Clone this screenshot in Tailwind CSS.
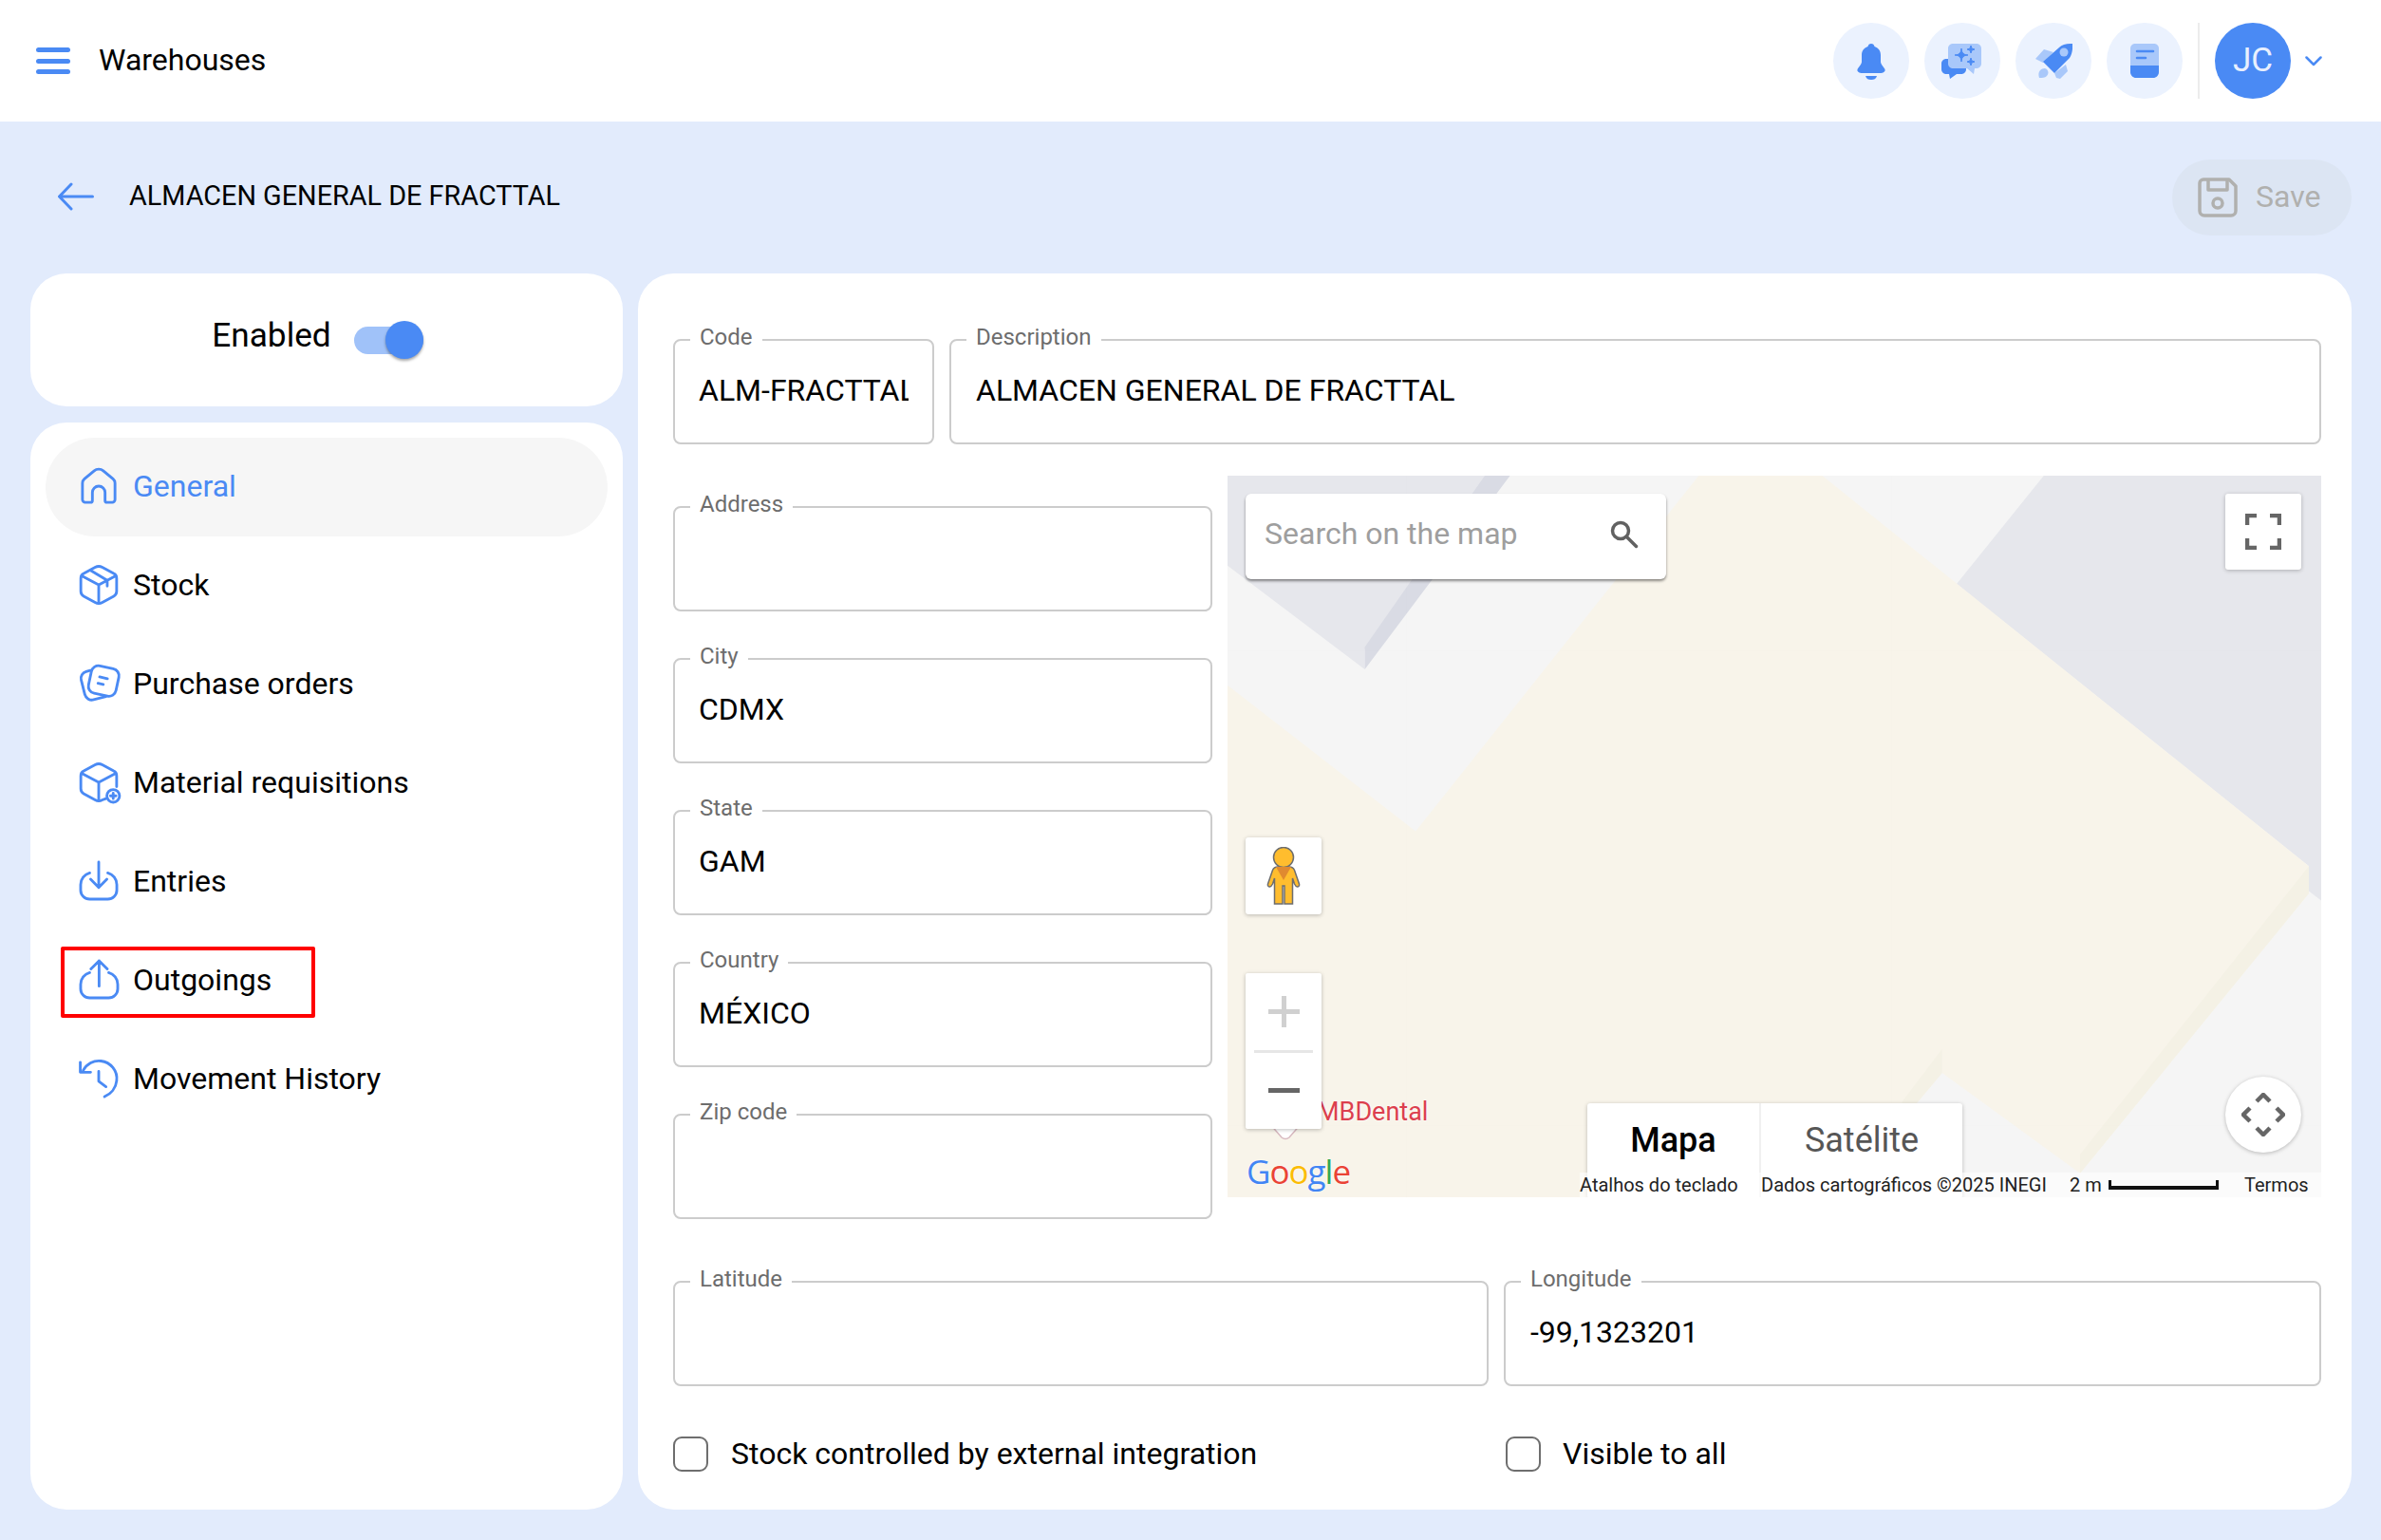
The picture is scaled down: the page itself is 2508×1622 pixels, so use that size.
<!DOCTYPE html>
<html lang="en">
<head>
  <meta charset="UTF-8">
  <title>Warehouses</title>
  <script src="https://cdn.jsdelivr.net/npm/@tailwindcss/browser@4"></script>
</head>
<body class="bg-[#e2ebfc] h-[1622px] overflow-hidden font-['Roboto',sans-serif] text-black">
  <!-- Top bar -->
  <header class="bg-white h-[128px] flex items-center pl-[38px] pr-[62px]">
    <div class="w-[36px] h-[28px] flex flex-col justify-between">
      <span class="h-[5px] rounded-full bg-[#4a8af4]"></span>
      <span class="h-[5px] rounded-full bg-[#4a8af4]"></span>
      <span class="h-[5px] rounded-full bg-[#4a8af4]"></span>
    </div>
    <div class="ml-[30px] -mt-[2px] text-[32px] leading-none">Warehouses</div>
    <div class="ml-auto flex items-center">
      <div class="flex gap-4">
        <div class="w-[80px] h-[80px] rounded-full bg-[#ebf2fe] flex items-center justify-center">
          <svg width="40" height="40" viewBox="0 0 40 40" fill="#4a8af4"><path d="M20 2c-2 0-3 1-3.500 3C12 6.500 10 10 10 14v7c0 3-3 5-4.500 8-.7 2 1 3.500 4 4h21c3-.5 4.700-2 4-4-1.500-3-4.500-5-4.500-8v-7c0-4-2-7.500-6.500-9C23 3 22 2 20 2Z"/><path d="M14 36h12c-1 3-3 4-6 4s-5-1-6-4Z"/></svg>
        </div>
        <div class="w-[80px] h-[80px] rounded-full bg-[#ebf2fe] flex items-center justify-center">
          <svg width="44" height="40" viewBox="0 0 44 40"><path fill="#4a8af4" d="M5 18h16c2.800 0 5 2.200 5 5v6c0 2.800-2.200 5-5 5h-5l-7 5-1-5H5c-2.800 0-5-2.200-5-5v-6c0-2.800 2.200-5 5-5Z"/><path fill="#a9c8fa" d="M12 2h25c2.800 0 5 2.200 5 5v16c0 2.800-2.200 5-5 5h-2l-1 6-7-6H12c-2.800 0-5-2.200-5-5V7c0-2.800 2.200-5 5-5Z"/><path fill="#4a8af4" d="M21 7Q21 14 28 14Q21 14 21 21Q21 14 14 14Q21 14 21 7Z M31 4Q31 8 35 8Q31 8 31 12Q31 8 27 8Q31 8 31 4Z M31 17Q31 21 35 21Q31 21 31 25Q31 21 27 21Q31 21 31 17Z" stroke="#4a8af4" stroke-width="1"/></svg>
        </div>
        <div class="w-[80px] h-[80px] rounded-full bg-[#ebf2fe] flex items-center justify-center">
          <svg width="40" height="40" viewBox="0 0 40 40"><path fill="#a9c8fa" d="M1 18l9-10 10 3-11 11ZM21 33l12-9 2 7-8 8-4-1ZM5 38c-1-3-1-6 1-8 2-2 5-3 7-1 2 2 2 5 0 7-2 2-5 2-8 2Z"/><path fill="#4a8af4" d="M9 21 26 6c3-3 8-4.500 14-4 .5 6-.5 11-3 15L21 33Z"/><circle cx="31" cy="11" r="4.500" fill="#a9c8fa"/></svg>
        </div>
        <div class="w-[80px] h-[80px] rounded-full bg-[#ebf2fe] flex items-center justify-center">
          <svg width="40" height="40" viewBox="0 0 40 40"><path fill="#a9c8fa" d="M10 2h20c2.800 0 5 2.200 5 5v22H5V7c0-2.800 2.200-5 5-5Z"/><path fill="#4a8af4" d="M5 25h30v7c0 3.300-2.700 6-6 6H11c-3.300 0-6-2.700-6-6Z"/><path stroke="#4a8af4" stroke-width="2.600" stroke-linecap="round" d="M12 10h17M12 17h9"/></svg>
        </div>
      </div>
      <div class="ml-4 w-[2px] h-[80px] bg-[#ececec]"></div>
      <div class="ml-4 w-[80px] h-[80px] rounded-full bg-[#4a8af4] text-[#e8f0fe] text-[35px] flex items-center justify-center">JC</div>
      <svg class="ml-[15px]" width="18" height="11" viewBox="0 0 18 11" fill="none" stroke="#4a8af4" stroke-width="2.500" stroke-linecap="round" stroke-linejoin="round"><path d="M1.500 1.500 9 9l7.500-7.500"/></svg>
    </div>
  </header>

  <!-- Sub header -->
  <div class="h-[160px] flex items-center pl-[61px] pr-[31px]">
    <svg class="-mt-[3px]" width="38" height="30" viewBox="0 0 38 30" fill="none" stroke="#4a8af4" stroke-width="3" stroke-linecap="round" stroke-linejoin="round"><path d="M36.500 15H2M14 2 1.500 15 14 28"/></svg>
    <div class="ml-[37px] -mt-[4px] text-[28.800px] leading-none">ALMACEN GENERAL DE FRACTTAL</div>
    <div class="ml-auto w-[189px] h-[80px] rounded-full bg-[#dce5f3] flex items-center pl-[27px] text-[#b0b0ae] text-[32px]">
      <svg width="42" height="42" viewBox="0 0 42 42" fill="none" stroke="#b0b0ae" stroke-width="3.500" stroke-linejoin="round"><path d="M6 2h27l7 7v26c0 2.800-2.200 5-5 5H7c-2.800 0-5-2.200-5-5V6c0-2.200 1.800-4 4-4Z"/><path d="M11 2v11h20V2"/><circle cx="21" cy="27" r="5"/></svg>
      <span class="ml-[19px] -mt-[3px]">Save</span>
    </div>
  </div>

  <div class="flex gap-4 pl-[32px] pr-[31px]">
    <!-- Left column -->
    <aside class="w-[624px] flex flex-col gap-[17px]">
      <div class="h-[140px] bg-white rounded-[38px] flex items-center justify-center pr-[19px]">
        <span class="text-[35.200px] leading-none -mt-[8px]">Enabled</span>
        <span class="relative ml-[24px] w-[73px] h-[29px] rounded-full bg-[#a0c2f9]">
          <span class="absolute right-0 -top-[6px] w-[40px] h-[40px] rounded-full bg-[#4a8af4] shadow-[0_2px_3px_rgba(0,0,0,0.35)]"></span>
        </span>
      </div>
      <nav class="h-[1145px] bg-white rounded-[38px] pt-4 px-4 text-[32px]">
        <a class="h-[104px] pb-[3px] rounded-full bg-[#f6f6f6] text-[#4a8af4] flex items-center pl-[36px] gap-4">
          <svg class="w-[40px] h-[40px] overflow-visible" viewBox="1.500 1.500 21 21" fill="none" stroke="#4a8af4" stroke-width="1.500" stroke-linejoin="round"><path d="M3 19.500V10.300c0-.9.400-1.700 1.100-2.300l5.400-4.500c1.400-1.200 3.600-1.200 5 0l5.400 4.500c.7.600 1.100 1.400 1.100 2.300v9.200c0 .8-.7 1.500-1.500 1.500h-3c-.6 0-1-.4-1-1v-4.500a3.500 3.500 0 0 0-7 0V20c0 .6-.4 1-1 1h-3C3.700 21 3 20.300 3 19.500Z"/></svg>
          General
        </a>
        <a class="h-[104px] pb-[3px] flex items-center pl-[36px] gap-4">
          <svg class="w-[40px] h-[40px] overflow-visible" viewBox="1.500 1.500 21 21" fill="none" stroke="#4a8af4" stroke-width="1.500" stroke-linecap="round" stroke-linejoin="round"><path d="M10 2.300c1.300-.7 2.700-.7 4 0l6.300 3.400c1 .5 1.600 1.600 1.600 2.700v7.200c0 1.100-.6 2.200-1.600 2.700L14 21.700c-1.300.7-2.700.7-4 0l-6.300-3.400c-1-.5-1.600-1.600-1.600-2.700V8.400c0-1.100.6-2.200 1.600-2.700Z"/><path d="M2.600 7 12 12l9.400-5M12 12v10M7.500 4l9.200 5.500v3.200"/></svg>
          Stock
        </a>
        <a class="h-[104px] pb-[3px] flex items-center pl-[36px] gap-4">
          <svg class="w-[40px] h-[40px] overflow-visible" viewBox="1.500 1.500 21 21" fill="none" stroke="#4a8af4" stroke-width="1.500" stroke-linecap="round" stroke-linejoin="round"><path d="M7.300 4.700 5 5.400C3 6 1.800 8 2.300 10l2 8c.6 2.200 2.800 3.500 4.900 2.900l6.800-1.700"/><rect x="7" y="2.800" width="15.500" height="15.500" rx="4" transform="rotate(12 14.700 10.500)"/><path d="M12.500 8.300l4.300 1M11.600 11.800l2.900.7"/></svg>
          Purchase orders
        </a>
        <a class="h-[104px] pb-[3px] flex items-center pl-[36px] gap-4">
          <svg class="w-[40px] h-[40px] overflow-visible" viewBox="1.500 1.500 21 21" fill="none" stroke="#4a8af4" stroke-width="1.500" stroke-linecap="round" stroke-linejoin="round"><path d="M16 21l-2 .7c-1.300.7-2.700.7-4 0l-6.300-3.400c-1-.5-1.600-1.600-1.600-2.700V8.400c0-1.100.6-2.200 1.600-2.700L10 2.300c1.300-.7 2.700-.7 4 0l6.300 3.400c1 .5 1.600 1.600 1.600 2.700v6"/><path d="M2.600 7 12 12l9.400-5M12 12v10"/><circle cx="20" cy="19.500" r="3.500"/><path d="M20 18v3M18.500 19.500h3"/></svg>
          Material requisitions
        </a>
        <a class="h-[104px] pb-[3px] flex items-center pl-[36px] gap-4">
          <svg class="w-[40px] h-[40px] overflow-visible" viewBox="1.500 1.500 21 21" fill="none" stroke="#4a8af4" stroke-width="1.500" stroke-linecap="round" stroke-linejoin="round"><path d="M7 7.500c-2.900.8-5 3.400-5 6.500v3c0 2.800 2.200 5 5 5h10c2.800 0 5-2.200 5-5v-3c0-3.100-2.100-5.700-5-6.500"/><path d="M12 1.500V15M7.500 11l4.500 4.500 4.500-4.500"/></svg>
          Entries
        </a>
        <a class="relative h-[104px] pb-[3px] flex items-center pl-[36px] gap-4">
          <svg class="w-[40px] h-[40px] overflow-visible" viewBox="1.500 1.500 21 21" fill="none" stroke="#4a8af4" stroke-width="1.500" stroke-linecap="round" stroke-linejoin="round"><path d="M7 8c-2.900.8-5 3.400-5 6.500V17c0 2.800 2.200 5 5 5h10.500c2.800 0 5-2.200 5-5v-2.500c0-3.100-2.100-5.700-5-6.500"/><path d="M12.200 15.500V1.500M7.700 6l4.500-4.500L16.700 6"/></svg>
          Outgoings
          <span class="absolute left-[16px] top-[16px] w-[268px] h-[75px] border-[4px] border-[#ff0000] rounded-[2px]"></span>
        </a>
        <a class="h-[104px] pb-[3px] flex items-center pl-[36px] gap-4">
          <svg class="w-[40px] h-[40px] overflow-visible" viewBox="1.500 1.500 21 21" fill="none" stroke="#4a8af4" stroke-width="1.500" stroke-linecap="round" stroke-linejoin="round"><path d="M3.400 7.500C5.300 3.900 9.200 1.800 13.200 2.300c5.400.6 9.400 5.500 8.700 10.900-.4 3.900-3.100 7.200-6.700 8.800"/><path d="M1.800 3v5.500h5.700M12 8v5.500l4 3"/></svg>
          Movement History
        </a>
      </nav>
    </aside>

    <!-- Form card -->
    <main class="flex-1 h-[1302px] bg-white rounded-[38px] pt-[69px] pl-[37px] pr-[32px]">
      <div class="flex gap-4">
        <div class="relative w-[275px] h-[111px] pb-[4px] border-2 border-[#cccccc] rounded-[8px] flex items-center pl-[25px] pr-[25px] text-[32px]">
          <span class="absolute left-[16px] -top-[19px] bg-white px-[10px] text-[24px] leading-[30px] text-[#6d6d6d]">Code</span>
          <div class="overflow-hidden whitespace-nowrap">ALM-FRACTTAL</div>
        </div>
        <div class="relative flex-1 h-[111px] pb-[4px] border-2 border-[#cccccc] rounded-[8px] flex items-center pl-[26px] text-[32px]">
          <span class="absolute left-[16px] -top-[19px] bg-white px-[10px] text-[24px] leading-[30px] text-[#6d6d6d]">Description</span>
          ALMACEN GENERAL DE FRACTTAL
        </div>
      </div>

      <div class="flex gap-4 mt-[33px]">
        <div class="w-[568px] pt-[32px] flex flex-col gap-[49px]">
          <div class="relative h-[111px] pb-[4px] border-2 border-[#cccccc] rounded-[8px] flex items-center pl-[25px] text-[32px]">
            <span class="absolute left-[16px] -top-[19px] bg-white px-[10px] text-[24px] leading-[30px] text-[#6d6d6d]">Address</span>
          </div>
          <div class="relative h-[111px] pb-[4px] border-2 border-[#cccccc] rounded-[8px] flex items-center pl-[25px] text-[32px]">
            <span class="absolute left-[16px] -top-[19px] bg-white px-[10px] text-[24px] leading-[30px] text-[#6d6d6d]">City</span>
            CDMX
          </div>
          <div class="relative h-[111px] pb-[4px] border-2 border-[#cccccc] rounded-[8px] flex items-center pl-[25px] text-[32px]">
            <span class="absolute left-[16px] -top-[19px] bg-white px-[10px] text-[24px] leading-[30px] text-[#6d6d6d]">State</span>
            GAM
          </div>
          <div class="relative h-[111px] pb-[4px] border-2 border-[#cccccc] rounded-[8px] flex items-center pl-[25px] text-[32px]">
            <span class="absolute left-[16px] -top-[19px] bg-white px-[10px] text-[24px] leading-[30px] text-[#6d6d6d]">Country</span>
            MÉXICO
          </div>
          <div class="relative h-[111px] pb-[4px] border-2 border-[#cccccc] rounded-[8px] flex items-center pl-[25px] text-[32px]">
            <span class="absolute left-[16px] -top-[19px] bg-white px-[10px] text-[24px] leading-[30px] text-[#6d6d6d]">Zip code</span>
          </div>
        </div>

        <!-- Map -->
        <div class="relative flex-1 h-[760px] overflow-hidden bg-[#f5f5f5]">
          <svg class="absolute inset-0 w-full h-full" viewBox="16 22 1506 1508" preserveAspectRatio="none">
            <path fill="#e6e7ec" d="M16 22H370L205 385V427L16 210Z"/>
            <path fill="#d9dbe4" d="M370 22H405L205 427V380Z"/>
            <path fill="#e6e7ec" d="M1140 22H1522V910L1505 890V838L1020 248Z"/>
            <path fill="#f8f4ea" d="M665 22H835L1505 838V895L1190 1480V1530H16V460L275 765Z"/>
            <path fill="#f5f5f5" d="M1000 1270 1190 1480V1530H900L945 1370Z"/>
            <path fill="#f4f1e5" d="M1000 1220V1270L945 1370V1330ZM1505 838V895L1190 1480V1440Z"/>
            <path stroke="#000" stroke-opacity="0.015" stroke-width="1" d="M262 22V1530M930 22V1530M16 388H1522M16 1380H1522"/>
          </svg>

          <div class="absolute left-[19px] top-[19px] w-[443px] h-[90px] bg-white rounded-[6px] shadow-[0_2px_3px_rgba(0,0,0,0.45)] flex items-center pl-[20px] text-[32px] text-[#9e9e9e]">
            <span class="-mt-[6px]">Search on the map</span>
            <svg class="absolute left-[383px] top-[27px]" width="32" height="32" viewBox="0 0 32 32" fill="none" stroke="#616161" stroke-width="3.500"><circle cx="12" cy="12" r="8.500"/><path stroke-linecap="round" d="m18.500 18.500 10 10"/></svg>
          </div>

          <div class="absolute left-[1051px] top-[19px] w-[80px] h-[80px] bg-white rounded-[3px] shadow-[0_1px_4px_rgba(0,0,0,0.25)] flex items-center justify-center">
            <svg width="38" height="38" viewBox="0 0 38 38" fill="none" stroke="#666666" stroke-width="4.500"><path d="M2 12V2h10M26 2h10v10M36 26v10H26M12 36H2V26"/></svg>
          </div>

          <div class="absolute left-[19px] top-[381px] w-[80px] h-[81px] bg-white rounded-[3px] shadow-[0_1px_4px_rgba(0,0,0,0.25)] flex items-center justify-center">
            <svg width="36" height="62" viewBox="0 0 36 62"><path fill="#ffbd2e" stroke="#6d6d6d" stroke-width="1.500" d="M12 21c-3 0-4.500 1-5.500 3.500L1.500 39c-.5 1.500.5 3 2 3s2-1 3-3l2-6v27h8.500V41h2v19h8.500V33l2 6c1 2 1.500 3 3 3s2.500-1.500 2-3l-5-14.500C28.500 22 27 21 24 21Z"/><circle cx="18" cy="11" r="10.500" fill="#ffbd2e" stroke="#6d6d6d" stroke-width="1.500"/><path fill="#e08a30" d="M10 21h16l-8 14Z"/></svg>
          </div>

          <span class="absolute left-[94px] top-[654px] text-[27px] leading-[32px] text-[#dc3f4e] [text-shadow:0_0_3px_white]">MBDental</span>
          <svg class="absolute left-[43px] top-[682px]" width="36" height="18" viewBox="0 0 36 18"><path fill="#ffffff" stroke="#d8b9c0" stroke-width="1.500" d="M1 0H35L22 15Q18 18 14 15Z"/></svg>

          <div class="absolute left-[19px] top-[524px] w-[80px] h-[164px] bg-white shadow-[0_1px_4px_rgba(0,0,0,0.25)] rounded-[2px]">
            <svg class="absolute left-[24px] top-[24px]" width="33" height="33" viewBox="0 0 33 33" fill="none" stroke="#d0d0d0" stroke-width="5"><path d="M16.500 0v33M0 16.500h33"/></svg>
            <div class="absolute left-[9px] top-[81px] w-[62px] h-[3px] bg-[#e6e6e6]"></div>
            <div class="absolute left-[24px] top-[121px] w-[33px] h-[5px] bg-[#666666]"></div>
          </div>

          <div class="absolute left-[1051px] top-[633px] w-[80px] h-[80px] bg-white rounded-full shadow-[0_1px_4px_rgba(0,0,0,0.25)] flex items-center justify-center">
            <svg width="46" height="46" viewBox="0 0 46 46" fill="none" stroke="#666666" stroke-width="4.500"><path d="M16 9 23 2l7 7M16 37l7 7 7-7M9 16 2 23l7 7M37 16l7 7-7 7"/></svg>
          </div>

          <div class="absolute left-[379px] top-[661px] flex h-[100px] text-[36px] bg-white shadow-[0_1px_4px_rgba(0,0,0,0.25)] rounded-[3px]">
            <div class="w-[183px] flex items-center justify-center font-medium pb-[22px] text-black border-r-2 border-[#f0f0f0]">Mapa</div>
            <div class="w-[212px] flex items-center justify-center pb-[22px] text-[#565656]">Satélite</div>
          </div>

          <div class="absolute left-[20px] top-[711px] text-[35px] leading-[44px] font-medium tracking-[-1px] font-['Open_Sans',sans-serif] [text-shadow:0_0_2px_white]"><span class="text-[#4285f4]">G</span><span class="text-[#ea4335]">o</span><span class="text-[#fbbc05]">o</span><span class="text-[#4285f4]">g</span><span class="text-[#34a853]">l</span><span class="text-[#ea4335]">e</span></div>

          <div class="absolute right-0 bottom-0 h-[26px] flex items-center text-[20px] text-[#222222] whitespace-nowrap">
            <span class="bg-white/60 h-full flex items-center pr-[15px] w-[191px]">Atalhos do teclado</span>
            <span class="bg-white/60 h-full flex items-center w-[325px]">Dados cartográficos ©2025 INEGI</span>
            <span class="bg-white/60 h-full flex items-center w-[184px]">2 m<span class="ml-[7px] w-[116px] h-[10px] border-x-[3px] border-b-[4px] border-[#111111]"></span></span>
            <span class="bg-white/60 h-full flex items-center pr-[13px] w-[81px]">Termos</span>
          </div>
        </div>
      </div>

      <div class="flex gap-4 mt-[65px]">
        <div class="relative w-[859px] h-[111px] pb-[4px] border-2 border-[#cccccc] rounded-[8px] flex items-center pl-[26px] text-[32px]">
          <span class="absolute left-[16px] -top-[19px] bg-white px-[10px] text-[24px] leading-[30px] text-[#6d6d6d]">Latitude</span>
        </div>
        <div class="relative flex-1 h-[111px] pb-[4px] border-2 border-[#cccccc] rounded-[8px] flex items-center pl-[26px] text-[32px]">
          <span class="absolute left-[16px] -top-[19px] bg-white px-[10px] text-[24px] leading-[30px] text-[#6d6d6d]">Longitude</span>
          -99,1323201
        </div>
      </div>

      <div class="flex mt-[53px] text-[32px] leading-[37px]">
        <label class="w-[877px] flex items-center gap-[24px]">
          <span class="w-[37px] h-[37px] border-2 border-[#6e6e6e] rounded-[9px]"></span>
          Stock controlled by external integration
        </label>
        <label class="flex items-center gap-[23px]">
          <span class="w-[37px] h-[37px] border-2 border-[#6e6e6e] rounded-[9px]"></span>
          Visible to all
        </label>
      </div>
    </main>
  </div>
</body>
</html>
